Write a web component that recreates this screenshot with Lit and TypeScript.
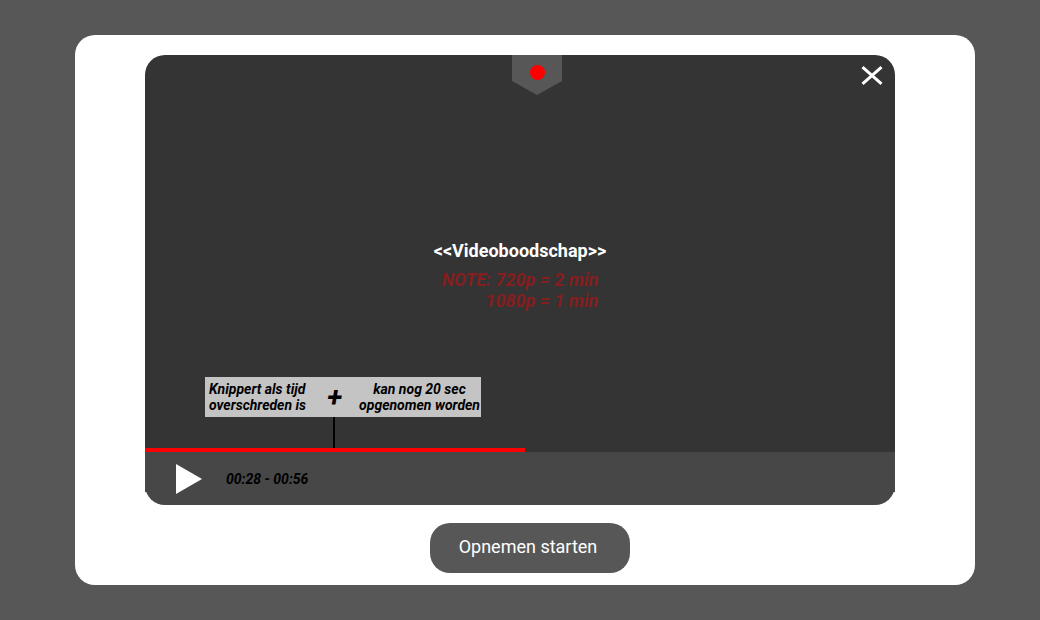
import { LitElement, html, css } from "lit";
import { customElement, property, state } from "lit/decorators.js";

@customElement("app-root")
export class AppRoot extends LitElement {
  @property({ type: Number }) position = 38;
  @property({ type: Number }) length = 75;
  @state() private open = true;

  static styles = css`
    :host {
      display: flex;
      box-sizing: border-box;
      min-height: 100vh;
      padding: 35px 65px 35px 75px;
      background: #575757;
      font-family: Roboto, "Liberation Sans", sans-serif;
      font-size: 14px;
      line-height: 16px;
      color: #000;
    }
    h1,
    p {
      margin: 0;
    }
    button {
      border: 0;
      padding: 0;
      background: none;
      color: #fff;
      font: inherit;
      cursor: pointer;
    }
    svg {
      display: block;
    }
    .dialog {
      flex: 1;
      display: flex;
      flex-direction: column;
      gap: 18px;
      padding: 20px 80px 12px 70px;
      border-radius: 20px;
      background: #fff;
    }
    .player {
      flex: 1;
      display: flex;
      flex-direction: column;
    }
    .stage {
      position: relative;
      flex: 1;
      display: flex;
      flex-direction: column;
      align-items: center;
      justify-content: center;
      gap: 8px;
      padding-top: 48px;
      border-radius: 20px 20px 0 0;
      background: #343434;
      font-size: 18px;
      line-height: 21px;
    }
    .title {
      font-size: 18px;
      font-weight: 700;
      color: #fff;
    }
    .limits {
      font-style: italic;
      font-weight: 700;
      text-align: right;
      color: #861d1f;
    }
    .recording {
      position: absolute;
      top: 0;
      left: 50%;
      margin-left: -8px;
    }
    .close {
      position: absolute;
      top: 10px;
      right: 12px;
    }
    .hint {
      position: absolute;
      left: 60px;
      bottom: 0;
      font-size: 14px;
      line-height: 16px;
      font-style: italic;
      font-weight: 700;
    }
    .hint-box {
      display: flex;
      align-items: center;
      box-sizing: border-box;
      height: 40px;
      padding: 0 1px 0 4px;
      background: #c4c4c4;
    }
    .hint-end {
      text-align: center;
    }
    .plus {
      width: 53px;
      padding: 2px 0 0 4px;
      box-sizing: border-box;
      text-align: center;
      font-size: 28px;
    }
    .stem {
      width: 2px;
      height: 31px;
      margin-left: 128px;
      background: #000;
    }
    .track {
      display: block;
      width: 100%;
      height: 4px;
      border: 0;
      appearance: none;
      background: #343434;
    }
    .track::-webkit-progress-bar {
      background: #343434;
    }
    .track::-webkit-progress-value {
      background: #f00;
    }
    .controls {
      position: relative;
      display: flex;
      align-items: center;
      gap: 24px;
      height: 53px;
      padding-left: 31px;
      border-radius: 0 0 20px 20px;
      background: #474747;
    }
    .controls::before {
      content: "";
      position: absolute;
      inset: 0 0 13px;
      background: #474747;
    }
    .play,
    .time {
      position: relative;
    }
    .time {
      font-style: italic;
      font-weight: 700;
    }
    .start {
      align-self: center;
      width: 200px;
      height: 50px;
      margin-left: 20px;
      padding: 0 4px 4px 0;
      border-radius: 20px;
      background: #575757;
      font-size: 18px;
      line-height: 21px;
    }
  `;

  render() {
    if (!this.open) return html``;
    return html`
      <main class="dialog">
        <section class="player" aria-label="Videoboodschap">
          <div class="stage">
            <h1 class="title">&lt;&lt;Videoboodschap&gt;&gt;</h1>
            <p class="limits">NOTE: 720p = 2 min<br />1080p = 1 min</p>
            <svg class="recording" width="50" height="40" viewBox="0 0 50 40" aria-hidden="true">
              <path d="M0 0H50V26L25 40L0 26Z" fill="#575757" />
              <circle cx="25.5" cy="17.5" r="7.5" fill="#f00" />
            </svg>
            <button class="close" aria-label="Sluiten" @click=${() => (this.open = false)}>
              <svg width="22" height="22" viewBox="0 0 22 22">
                <path d="M1.5 2.2L20.5 18.8M20.5 2.2L1.5 18.8" stroke="#fff" stroke-width="3" />
              </svg>
            </button>
            <div class="hint">
              <div class="hint-box">
                <p>Knippert als tijd<br />overschreden is</p>
                <span class="plus">+</span>
                <p class="hint-end">kan nog 20 sec<br />opgenomen worden</p>
              </div>
              <div class="stem"></div>
            </div>
          </div>
          <progress class="track" aria-label="Voortgang" value=${this.position} max=${this.length}></progress>
          <div class="controls">
            <button class="play" aria-label="Afspelen">
              <svg width="26" height="30" viewBox="0 0 26 30">
                <path d="M0 0L26 15L0 30Z" fill="#fff" />
              </svg>
            </button>
            <span class="time">00:28 - 00:56</span>
          </div>
        </section>
        <button class="start">Opnemen starten</button>
      </main>
    `;
  }
}
